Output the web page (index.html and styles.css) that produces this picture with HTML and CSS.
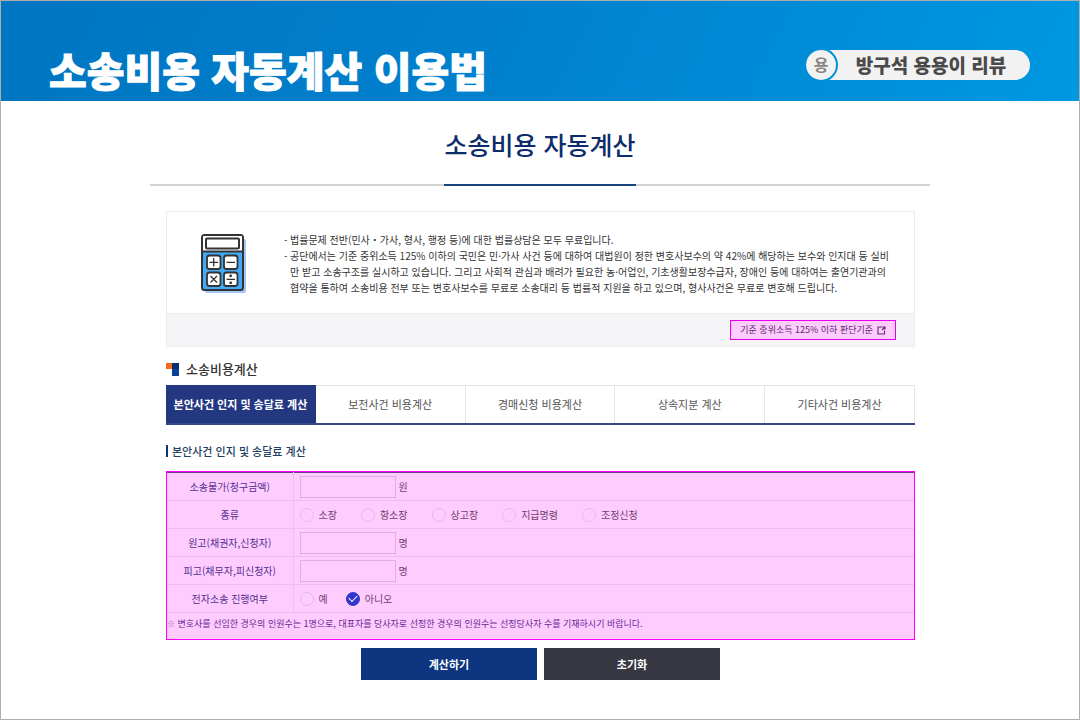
FILE: index.html
```html
<!DOCTYPE html>
<html lang="ko">
<head>
<meta charset="utf-8">
<meta name="viewport" content="width=device-width, initial-scale=1">
<title>소송비용 자동계산 이용법</title>
<link rel="stylesheet" href="styles.css">
</head>
<body>
<header class="banner">
  <h1 class="banner-title">소송비용 자동계산 이용법</h1>
  <div class="brand"><span class="brand-mark">용</span><span class="brand-name">방구석 용용이 리뷰</span></div>
</header>
<main class="content">
  <div class="page-head"><h2 class="page-title">소송비용 자동계산</h2></div>
  <div class="inner">
    <section class="info">
      <div class="info-body">
        <svg class="calc-icon" width="46" height="60" viewBox="0 0 46 60" aria-hidden="true">
          <rect x="4" y="5" width="41" height="54" rx="2" fill="#a5c6f5"/>
          <rect x="1" y="1" width="41" height="55" rx="2.500" fill="#43aaf5" stroke="#333" stroke-width="2"/>
          <path d="M2 2h39v15H2z" fill="#fff"/>
          <path d="M1 17.500h41" stroke="#333" stroke-width="2"/>
          <rect x="5" y="4.500" width="33" height="10" rx="1" fill="#fff" stroke="#333" stroke-width="2"/>
          <g fill="#fff" stroke="#333" stroke-width="1.800">
            <rect x="6" y="21.500" width="13.500" height="13.500" rx="2.500"/>
            <rect x="23" y="21.500" width="13.500" height="13.500" rx="2.500"/>
            <rect x="6" y="38.500" width="13.500" height="13.500" rx="2.500"/>
            <rect x="23" y="38.500" width="13.500" height="13.500" rx="2.500"/>
          </g>
          <g stroke="#333" stroke-width="1.300" fill="none">
            <path d="M8.500 28.300h8.500M12.700 24v8.500M25.500 28.300h8.500M9.500 42l6.500 6.500M16 42l-6.500 6.500M25.500 45.300h8.500"/>
          </g>
          <circle cx="29.700" cy="41.800" r="1.400" fill="#333"/>
          <circle cx="29.700" cy="48.800" r="1.400" fill="#333"/>
        </svg>
        <ul class="info-list">
          <li>법률문제 전반(민사・가사, 형사, 행정 등)에 대한 법률상담은 모두 무료입니다.</li>
          <li>공단에서는 기준 중위소득 125% 이하의 국민은 민·가사 사건 등에 대하여 대법원이 정한 변호사보수의 약 42%에 해당하는 보수와 인지대 등 실비<br>만 받고 소송구조를 실시하고 있습니다. 그리고 사회적 관심과 배려가 필요한 농·어업인, 기초생활보장수급자, 장애인 등에 대하여는 출연기관과의<br>협약을 통하여 소송비용 전부 또는 변호사보수를 무료로 소송대리 등 법률적 지원을 하고 있으며, 형사사건은 무료로 변호해 드립니다.</li>
        </ul>
      </div>
      <div class="info-foot">
        <a class="criteria" href="#criteria">기준 중위소득 125% 이하 판단기준
          <svg width="9" height="9" viewBox="0 0 9 9" aria-hidden="true"><path d="M5 1H1v7h6.500V4.500M5.500 1H8v2.500M8 1L5 4" fill="none" stroke="#5a2a6a" stroke-width="1.100"/></svg>
        </a>
      </div>
    </section>
    <h3 class="section-title">
      <svg width="13" height="13" viewBox="0 0 13 13" aria-hidden="true"><path d="M0 0h7v6H0z" fill="#f36b21"/><path d="M6 0h7v13H6z" fill="#0b4199"/><path d="M6 0h7v6H6z" fill="#0a2e6c"/></svg>
      소송비용계산
    </h3>
    <nav class="tabs">
      <a class="tab tab-active" href="#main" aria-current="page">본안사건 인지 및 송달료 계산</a>
      <a class="tab" href="#preserve">보전사건 비용계산</a>
      <a class="tab" href="#auction">경매신청 비용계산</a>
      <a class="tab" href="#inherit">상속지분 계산</a>
      <a class="tab" href="#etc">기타사건 비용계산</a>
    </nav>
    <h4 class="sub-title">본안사건 인지 및 송달료 계산</h4>
    <form>
      <div class="form-box">
        <table class="form-table">
          <tr><th scope="row"><label for="amount">소송물가(청구금액)</label></th><td><div class="field"><input class="text" id="amount" type="text"><span>원</span></div></td></tr>
          <tr><th scope="row">종류</th><td><div class="options">
            <label><input type="radio" name="kind">소장</label>
            <label><input type="radio" name="kind">항소장</label>
            <label><input type="radio" name="kind">상고장</label>
            <label><input type="radio" name="kind">지급명령</label>
            <label><input type="radio" name="kind">조정신청</label>
          </div></td></tr>
          <tr><th scope="row"><label for="plaintiff">원고(채권자,신청자)</label></th><td><div class="field"><input class="text" id="plaintiff" type="text"><span>명</span></div></td></tr>
          <tr><th scope="row"><label for="defendant">피고(채무자,피신청자)</label></th><td><div class="field"><input class="text" id="defendant" type="text"><span>명</span></div></td></tr>
          <tr><th scope="row">전자소송 진행여부</th><td><div class="options options-tight">
            <label><input type="radio" name="online">예</label>
            <label><input type="radio" name="online" checked>아니오</label>
          </div></td></tr>
        </table>
        <p class="note"><span class="note-mark">※</span> 변호사를 선임한 경우의 인원수는 1명으로, 대표자를 당사자로 선정한 경우의 인원수는 선정당사자 수를 기재하시기 바랍니다.</p>
      </div>
      <div class="actions">
        <button class="btn btn-primary" type="button">계산하기</button>
        <button class="btn" type="reset">초기화</button>
      </div>
    </form>
  </div>
</main>
</body>
</html>
```

FILE: styles.css
```css
* { box-sizing: border-box; }
body {
  margin: 0;
  min-height: 100vh;
  border: 1px solid #adadad;
  background: #fff;
  color: #333;
  font-family: "Noto Sans CJK KR", "Noto Sans", sans-serif;
  font-size: 10px;
  line-height: 16px;
}
h1, h2, h3, h4, p, ul { margin: 0; padding: 0; }
a { color: inherit; text-decoration: none; }
svg { flex: none; }

.banner {
  display: flex;
  justify-content: space-between;
  align-items: flex-start;
  padding: 48px 49px 12px 48px;
  background: linear-gradient(115deg, #0075c1, #0080cd 45%, #0098e1);
}
.banner-title {
  color: #fff;
  font-size: 41px;
  line-height: 40px;
  font-weight: 900;
  -webkit-text-stroke: 1px #fff;
}
.brand {
  display: flex;
  align-items: center;
  width: 224px;
  height: 30px;
  margin-top: 1px;
  border-radius: 15px;
  overflow: hidden;
  background: #f2f2f2;
  color: #4a4a4a;
  font-size: 19px;
  font-weight: 900;
}
.brand-mark {
  width: 30px;
  height: 30px;
  border-radius: 15px;
  background: #f2f2f2;
  box-shadow: 0 0 0 2px #0091da;
  color: #858585;
  font-size: 16px;
  line-height: 29px;
  font-weight: 700;
  text-align: center;
}
.brand-name { flex: 1; padding-right: 4px; text-align: center; }

.content { max-width: 780px; margin: 0 auto; }
.page-head {
  display: flex;
  justify-content: center;
  padding-top: 28px;
  border-bottom: 2px solid #d2d2d2;
}
.page-title {
  margin-bottom: -2px;
  padding-bottom: 25px;
  border-bottom: 2px solid #17437f;
  color: #0d2c6c;
  font-size: 25px;
  line-height: 30px;
  font-weight: 500;
}
.inner { padding: 25px 15px 0 16px; }

.info { border: 1px solid #ececec; }
.info-body { display: flex; align-items: flex-start; padding: 20px 12px 17px 34px; }
.calc-icon { margin-top: 2px; }
.info-list { margin-left: 43px; list-style: none; white-space: nowrap; color: #333; }
.info-list li { position: relative; }
.info-list li::before { content: "-"; position: absolute; left: -6px; }
.info-foot {
  display: flex;
  justify-content: flex-end;
  padding: 6px 18px;
  border-top: 1px solid #ececec;
  background: #f5f5f7;
}
.criteria {
  display: flex;
  align-items: center;
  gap: 4px;
  height: 20px;
  padding: 0 9px;
  border: 1px solid #ea00ea;
  background: #fcf;
  color: #5a2a6a;
  font-size: 9px;
}

.section-title {
  display: flex;
  align-items: center;
  gap: 7px;
  padding: 14px 0 8px;
  color: #333;
  font-size: 13px;
  font-weight: 500;
}
.tabs { display: flex; border-bottom: 2px solid #34498a; }
.tab {
  flex: 1;
  height: 38px;
  border-top: 1px solid #e6e6e6;
  border-right: 1px solid #e6e6e6;
  color: #555;
  font-size: 11px;
  line-height: 37px;
  text-align: center;
  white-space: nowrap;
}
.tab-active { border-color: #243882; background: #243882; color: #fff; font-weight: 700; }
.sub-title {
  display: flex;
  align-items: center;
  gap: 4px;
  margin: 18px 0 12px;
  color: #24405f;
  font-size: 11px;
  font-weight: 500;
}
.sub-title::before { content: ""; width: 2px; height: 12px; background: #0c3478; }

.form-box { border: 1px solid #f0f; background: #fcf; }
.form-table {
  width: 100%;
  border-collapse: collapse;
  border-top: 1px solid #6a3b94;
  color: #704070;
}
.form-table tr { height: 28px; border-bottom: 1px solid #efbdf2; }
.form-table th {
  width: 126px;
  padding: 0;
  border-right: 1px solid #efbdf2;
  color: #53308f;
  font-weight: 400;
}
.form-table td { padding: 0 6px; }
.field { display: flex; align-items: center; gap: 3px; }
.text {
  width: 96px;
  height: 22px;
  padding: 0 4px;
  border: 1px solid #dfaee4;
  background: transparent;
  color: inherit;
  font: inherit;
}
.options { display: flex; align-items: center; gap: 24px; }
.options-tight { gap: 18px; }
.options label { display: flex; align-items: center; gap: 5px; }
.options input {
  appearance: none;
  width: 14px;
  height: 14px;
  margin: 0;
  border: 1px solid #e5b8e8;
  border-radius: 50%;
  display: grid;
  place-items: center;
}
.options input:checked { border-color: #3335cf; background: #3335cf; }
.options input:checked::after {
  content: "";
  width: 7px;
  height: 4px;
  margin-bottom: 2px;
  border: solid #fff;
  border-width: 0 0 1px 1px;
  transform: rotate(-45deg);
}
.note { padding: 3px 0 7px; color: #632a92; font-size: 9px; }
.note-mark { color: #a36cb0; font-size: 8px; }

.actions { display: flex; justify-content: center; gap: 7px; padding: 8px 0; }
.btn {
  width: 176px;
  height: 32px;
  padding: 0;
  border: 0;
  background: #383842;
  color: #fff;
  font: inherit;
  font-size: 11px;
  font-weight: 700;
}
.btn-primary { background: #0d3580; }
```
